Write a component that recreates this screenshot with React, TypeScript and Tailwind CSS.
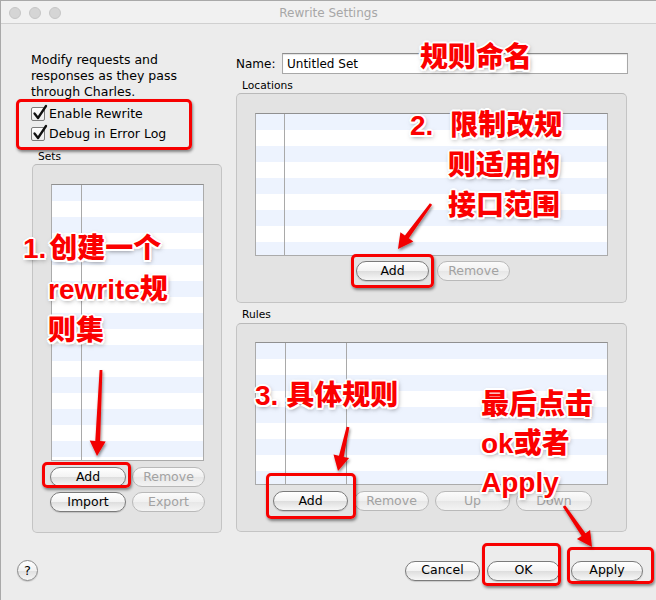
import React from "react";

function Btn({ label, className = "", disabled = false }: { label: string; className?: string; disabled?: boolean }) {
  return (
    <div
      className={`flex h-[20px] items-center justify-center rounded-full border text-[12.5px] leading-none ${
        disabled
          ? "border-[#b9b9b9] text-[#a2a2a2] bg-[linear-gradient(#fbfbfb,#f0f0f0_50%,#e7e7e7_52%,#f3f3f3)]"
          : "border-[#7b7b7b] text-black bg-[linear-gradient(#ffffff,#f3f3f3_48%,#dedede_52%,#f7f7f7)] shadow-[0_1px_1px_rgba(0,0,0,0.15)]"
      } ${className}`}
    >
      {label}
    </div>
  );
}

function Table({ cols, className }: { cols: string[]; className: string }) {
  return (
    <div
      className={`flex border border-[#ababab] border-t-[#909090] bg-[repeating-linear-gradient(180deg,#edf3fe_0px,#edf3fe_16px,#ffffff_16px,#ffffff_32px)] ${className}`}
    >
      {cols.map((c, i) => (
        <div key={i} className={`${c} h-full border-r border-[#a9a9a9]`} />
      ))}
      <div className="flex-1" />
    </div>
  );
}

function Check({ label }: { label: string }) {
  return (
    <div className="flex h-[20px] items-center gap-[4px]">
      <div className="relative h-[14px] w-[14px] rounded-[2px] border border-[#7c7c7c] bg-[linear-gradient(#ffffff,#ececec)]">
        <svg className="absolute -left-[1px] -top-[4px]" width="17" height="17" viewBox="0 0 17 17">
          <path d="M3.5 9.5 L7 14 L15 2" fill="none" stroke="#111" strokeWidth="2.3" strokeLinecap="round" strokeLinejoin="round" />
        </svg>
      </div>
      <span className="text-[12.5px] leading-none">{label}</span>
    </div>
  );
}

function arrowPts(x1: number, y1: number, x2: number, y2: number, tailW = 1.4, shaftW = 2.4, headW = 8, headL = 15) {
  const dx = x2 - x1;
  const dy = y2 - y1;
  const len = Math.hypot(dx, dy);
  const ux = dx / len;
  const uy = dy / len;
  const px = -uy;
  const py = ux;
  const bx = x2 - ux * headL;
  const by = y2 - uy * headL;
  const p = [
    [x1 + px * tailW, y1 + py * tailW],
    [bx + px * shaftW, by + py * shaftW],
    [bx + px * headW, by + py * headW],
    [x2, y2],
    [bx - px * headW, by - py * headW],
    [bx - px * shaftW, by - py * shaftW],
    [x1 - px * tailW, y1 - py * tailW],
  ];
  return p.map((q) => `${q[0].toFixed(1)},${q[1].toFixed(1)}`).join(" ");
}

const redBox = "absolute rounded-[5px] border-[3px] border-[#f70000] shadow-[1px_2px_3px_rgba(0,0,0,0.45)]";
const ann =
  "absolute whitespace-nowrap font-['Liberation_Sans','Noto_Sans_CJK_SC',sans-serif] font-black text-[28px] text-[#fb0000] [text-shadow:2px_0_0_#fff,-2px_0_0_#fff,0_2px_0_#fff,0_-2px_0_#fff,1.5px_1.5px_0_#fff,-1.5px_1.5px_0_#fff,1.5px_-1.5px_0_#fff,-1.5px_-1.5px_0_#fff,1px_2px_5px_rgba(0,0,0,0.55)]";

export default function App() {
  return (
    <div className="relative h-[600px] w-[656px] overflow-hidden border-l border-t border-[#a9a9a9] bg-[#ececec] font-['DejaVu_Sans',sans-serif] text-black">
      {/* title bar */}
      <div className="grid h-[23px] grid-cols-[1fr_auto_1fr] items-center border-b border-[#d0d0d0] bg-[#f1f1f1]">
        <div className="flex gap-[8px] pl-[8px] pt-[1px]">
          <div className="h-[12px] w-[12px] rounded-full border border-[#c6c6c6] bg-[#d5d5d5]" />
          <div className="h-[12px] w-[12px] rounded-full border border-[#c6c6c6] bg-[#d5d5d5]" />
          <div className="h-[12px] w-[12px] rounded-full border border-[#c6c6c6] bg-[#d5d5d5]" />
        </div>
        <div className="pt-[1px] text-[12px] text-[#a7a7a7]">Rewrite Settings</div>
        <div />
      </div>

      {/* body */}
      <div className="flex pl-[30px]">
        {/* left column */}
        <div className="flex w-[191px] flex-col">
          <p className="mt-[28px] whitespace-nowrap text-[12.5px] leading-[16px]">
            Modify requests and
            <br />
            responses as they pass
            <br />
            through Charles.
          </p>
          <div className="mt-[4px] flex flex-col">
            <Check label="Enable Rewrite" />
            <Check label="Debug in Error Log" />
          </div>
          <div className="mt-[5px] h-[14px] pl-[7px] text-[10.7px] leading-[15px]">Sets</div>
          <div className="ml-[1px] mt-[1px] flex h-[369px] w-[190px] flex-col rounded-[5px] border border-[#c4c4c4] border-t-[#b9b9b9] bg-[#e3e3e3] pl-[18px] pt-[19px]">
            <Table cols={["w-[30px]"]} className="h-[277px] w-[153px]" />
            <div className="-ml-[1px] mt-[6px] flex gap-[6px]">
              <Btn label="Add" className="w-[76px]" />
              <Btn label="Remove" className="w-[73px]" disabled />
            </div>
            <div className="-ml-[1px] mt-[5px] flex gap-[6px]">
              <Btn label="Import" className="w-[76px]" />
              <Btn label="Export" className="w-[73px]" disabled />
            </div>
          </div>
        </div>

        {/* right column */}
        <div className="ml-[14px] flex w-[392px] flex-col">
          <div className="mt-[29px] flex h-[21px] items-center">
            <span className="w-[46px] pt-[1px] text-[12px]">Name:</span>
            <div className="flex h-[21px] w-[346px] items-center border border-[#a8a8a8] border-t-[#8c8c8c] bg-white pl-[4px] pt-[1px] text-[12px] shadow-[inset_0_1px_1px_rgba(0,0,0,0.12)]">
              Untitled Set
            </div>
          </div>
          <div className="mt-[4px] h-[14px] pl-[6px] text-[10.7px] leading-[15px]">Locations</div>
          <div className="mt-[1px] flex h-[210px] w-[391px] flex-col rounded-[5px] border border-[#c4c4c4] border-t-[#b9b9b9] bg-[#e3e3e3] pt-[19px]">
            <div className="pl-[18px]">
              <Table cols={["w-[29px]"]} className="h-[143px] w-[353px]" />
            </div>
            <div className="mt-[5px] flex justify-center gap-[8px] pl-[3px]">
              <Btn label="Add" className="w-[73px]" />
              <Btn label="Remove" className="w-[73px]" disabled />
            </div>
          </div>
          <div className="mt-[4px] h-[14px] pl-[6px] text-[10.7px] leading-[15px]">Rules</div>
          <div className="mt-[2px] flex h-[209px] w-[391px] flex-col rounded-[5px] border border-[#c4c4c4] border-t-[#b9b9b9] bg-[#e3e3e3] pt-[18px]">
            <div className="pl-[18px]">
              <Table cols={["w-[30px]", "w-[61px]"]} className="h-[143px] w-[353px]" />
            </div>
            <div className="mt-[6px] flex justify-center gap-[6px] pl-[2px]">
              <Btn label="Add" className="w-[75px]" />
              <Btn label="Remove" className="w-[75px]" disabled />
              <Btn label="Up" className="w-[75px]" disabled />
              <Btn label="Down" className="w-[76px]" disabled />
            </div>
          </div>
        </div>
      </div>

      {/* footer */}
      <div className="mt-[27px] flex h-[21px] items-center pl-[16px] pr-[13px]">
        <div className="flex h-[21px] w-[21px] items-center justify-center rounded-full border border-[#8a8a8a] bg-[linear-gradient(#ffffff,#f1f1f1_50%,#e0e0e0_52%,#f6f6f6)] text-[13px] leading-none shadow-[0_1px_1px_rgba(0,0,0,0.15)]">
          ?
        </div>
        <div className="ml-auto flex">
          <Btn label="Cancel" className="w-[75px]" />
          <Btn label="OK" className="ml-[7px] w-[73px]" />
          <Btn label="Apply" className="ml-[11px] w-[72px]" />
        </div>
      </div>

      {/* annotations overlay */}
      <div className="pointer-events-none absolute -left-px -top-px h-[600px] w-[656px]">
        <div className={`${redBox} left-[16px] top-[99px] h-[51px] w-[176px]`} />
        <div className={`${redBox} left-[42px] top-[462px] h-[26px] w-[89px]`} />
        <div className={`${redBox} left-[351px] top-[254px] h-[34px] w-[83px]`} />
        <div className={`${redBox} left-[266px] top-[473px] h-[46px] w-[90px]`} />
        <div className={`${redBox} left-[482px] top-[543px] h-[43px] w-[79px]`} />
        <div className={`${redBox} left-[567px] top-[547px] h-[37px] w-[87px]`} />

        <svg className="absolute left-0 top-0" width="656" height="600" viewBox="0 0 656 600">
          <defs>
            <filter id="sh" x="-50%" y="-50%" width="200%" height="200%">
              <feDropShadow dx="1" dy="2" stdDeviation="1.5" floodColor="#000" floodOpacity="0.45" />
            </filter>
          </defs>
          <g fill="#f20000" filter="url(#sh)">
            <polygon points={arrowPts(101, 370, 97, 456)} />
            <polygon points={arrowPts(431, 204, 398, 249)} />
            <polygon points={arrowPts(348, 427, 338, 471)} />
            <polygon points={arrowPts(564, 506, 592, 547)} />
          </g>
        </svg>

        <div className={`${ann} left-[420px] top-[38px] leading-[40px]`}>规则命名</div>
        <div className={`${ann} left-[410px] top-[106px] leading-[40px]`}>
          <div>
            <span className="mr-[17px]">2.</span>限制改规
          </div>
          <div className="pl-[38px]">则适用的</div>
          <div className="pl-[38px]">接口范围</div>
        </div>
        <div className={`${ann} left-[23px] top-[228px] leading-[41px]`}>
          <div>
            <span className="mr-[3px]">1.</span>创建一个
          </div>
          <div className="pl-[25px]">rewrite规</div>
          <div className="pl-[25px]">则集</div>
        </div>
        <div className={`${ann} left-[255px] top-[376px] leading-[40px]`}>3. 具体规则</div>
        <div className={`${ann} left-[481px] top-[385px] leading-[39px]`}>
          <div>最后点击</div>
          <div>ok或者</div>
          <div>Apply</div>
        </div>
      </div>
    </div>
  );
}
